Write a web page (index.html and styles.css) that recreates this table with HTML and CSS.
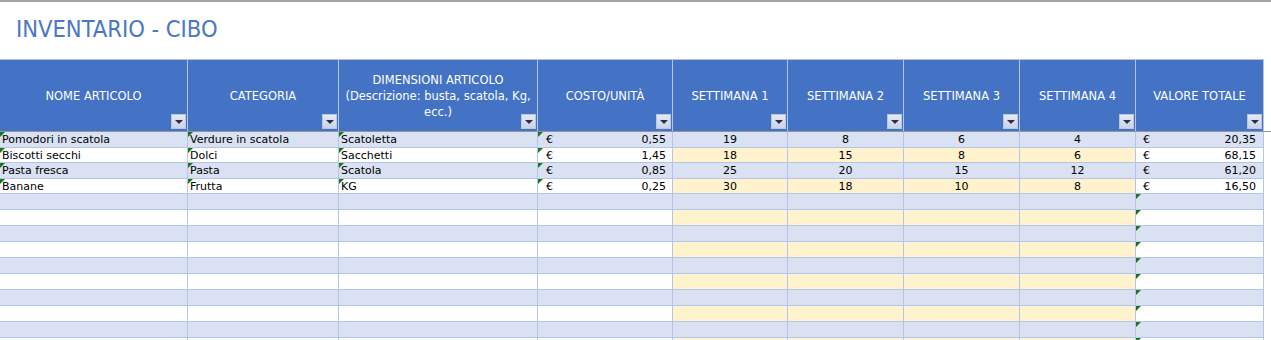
FILE: index.html
```html
<!DOCTYPE html>
<html lang="it">
<head>
<meta charset="utf-8">
<title>Inventario - Cibo</title>
<link rel="stylesheet" href="styles.css">
</head>
<body>
<div class="sheet">
  <h1 class="title">INVENTARIO - CIBO</h1>
  <div class="row head">
    <div class="hc"><span>NOME ARTICOLO</span><i class="dd"></i></div>
    <div class="hc"><span>CATEGORIA</span><i class="dd"></i></div>
    <div class="hc"><span>DIMENSIONI ARTICOLO<br>(Descrizione: busta, scatola, Kg,<br>ecc.)</span><i class="dd"></i></div>
    <div class="hc"><span>COSTO/UNITÀ</span><i class="dd"></i></div>
    <div class="hc"><span>SETTIMANA 1</span><i class="dd"></i></div>
    <div class="hc"><span>SETTIMANA 2</span><i class="dd"></i></div>
    <div class="hc"><span>SETTIMANA 3</span><i class="dd"></i></div>
    <div class="hc"><span>SETTIMANA 4</span><i class="dd"></i></div>
    <div class="hc"><span>VALORE TOTALE</span><i class="dd"></i></div>
  </div>
  <div class="freeze"></div>

  <div class="row alt tall">
    <div class="c flag">Pomodori in scatola</div>
    <div class="c flag">Verdure in scatola</div>
    <div class="c flag">Scatoletta</div>
    <div class="c money flag"><span>€</span><span>0,55</span></div>
    <div class="c wk num">19</div>
    <div class="c wk num">8</div>
    <div class="c wk num">6</div>
    <div class="c wk num">4</div>
    <div class="c money tot"><span>€</span><span>20,35</span></div>
  </div>
  <div class="row plain short">
    <div class="c flag">Biscotti secchi</div>
    <div class="c flag">Dolci</div>
    <div class="c flag">Sacchetti</div>
    <div class="c money flag"><span>€</span><span>1,45</span></div>
    <div class="c wk num">18</div>
    <div class="c wk num">15</div>
    <div class="c wk num">8</div>
    <div class="c wk num">6</div>
    <div class="c money tot"><span>€</span><span>68,15</span></div>
  </div>
  <div class="row alt tall">
    <div class="c flag">Pasta fresca</div>
    <div class="c flag">Pasta</div>
    <div class="c flag">Scatola</div>
    <div class="c money flag"><span>€</span><span>0,85</span></div>
    <div class="c wk num">25</div>
    <div class="c wk num">20</div>
    <div class="c wk num">15</div>
    <div class="c wk num">12</div>
    <div class="c money tot"><span>€</span><span>61,20</span></div>
  </div>
  <div class="row plain short">
    <div class="c flag">Banane</div>
    <div class="c flag">Frutta</div>
    <div class="c flag">KG</div>
    <div class="c money flag"><span>€</span><span>0,25</span></div>
    <div class="c wk num">30</div>
    <div class="c wk num">18</div>
    <div class="c wk num">10</div>
    <div class="c wk num">8</div>
    <div class="c money tot"><span>€</span><span>16,50</span></div>
  </div>

  <div class="row alt tall"><div class="c"></div><div class="c"></div><div class="c"></div><div class="c"></div><div class="c wk"></div><div class="c wk"></div><div class="c wk"></div><div class="c wk"></div><div class="c tot flag"></div></div>
  <div class="row plain tall"><div class="c"></div><div class="c"></div><div class="c"></div><div class="c"></div><div class="c wk"></div><div class="c wk"></div><div class="c wk"></div><div class="c wk"></div><div class="c tot flag"></div></div>
  <div class="row alt tall"><div class="c"></div><div class="c"></div><div class="c"></div><div class="c"></div><div class="c wk"></div><div class="c wk"></div><div class="c wk"></div><div class="c wk"></div><div class="c tot flag"></div></div>
  <div class="row plain tall"><div class="c"></div><div class="c"></div><div class="c"></div><div class="c"></div><div class="c wk"></div><div class="c wk"></div><div class="c wk"></div><div class="c wk"></div><div class="c tot flag"></div></div>
  <div class="row alt tall"><div class="c"></div><div class="c"></div><div class="c"></div><div class="c"></div><div class="c wk"></div><div class="c wk"></div><div class="c wk"></div><div class="c wk"></div><div class="c tot flag"></div></div>
  <div class="row plain tall"><div class="c"></div><div class="c"></div><div class="c"></div><div class="c"></div><div class="c wk"></div><div class="c wk"></div><div class="c wk"></div><div class="c wk"></div><div class="c tot flag"></div></div>
  <div class="row alt tall"><div class="c"></div><div class="c"></div><div class="c"></div><div class="c"></div><div class="c wk"></div><div class="c wk"></div><div class="c wk"></div><div class="c wk"></div><div class="c tot flag"></div></div>
  <div class="row plain tall"><div class="c"></div><div class="c"></div><div class="c"></div><div class="c"></div><div class="c wk"></div><div class="c wk"></div><div class="c wk"></div><div class="c wk"></div><div class="c tot flag"></div></div>
  <div class="row alt tall"><div class="c"></div><div class="c"></div><div class="c"></div><div class="c"></div><div class="c wk"></div><div class="c wk"></div><div class="c wk"></div><div class="c wk"></div><div class="c tot flag"></div></div>
  <div class="row plain tall"><div class="c"></div><div class="c"></div><div class="c"></div><div class="c"></div><div class="c wk"></div><div class="c wk"></div><div class="c wk"></div><div class="c wk"></div><div class="c tot flag"></div></div>
</div>
</body>
</html>
```
FILE: styles.css
```css
html, body {
  margin: 0;
  padding: 0;
  background: #ffffff;
}

body {
  font-family: "DejaVu Sans", Verdana, sans-serif;
  color: #000000;
}

.sheet {
  width: 1271px;
  height: 340px;
  box-sizing: border-box;
  border-top: 2px solid #a4a4a4;
  overflow: hidden;
}

.title {
  margin: 0;
  height: 57px;
  box-sizing: border-box;
  display: flex;
  align-items: center;
  padding: 0 0 4px 16px;
  font-family: "DejaVu Sans Condensed", "DejaVu Sans", Verdana, sans-serif;
  font-size: 23.5px;
  font-weight: normal;
  color: #4a78c3;
}

.row {
  display: grid;
  grid-template-columns: 188px 151px 199px 135px 115px 116px 116px 116px 128px;
  width: 1264px;
}

.head {
  border-top: 1px solid #b4c6e7;
}

.hc {
  position: relative;
  height: 71px;
  box-sizing: border-box;
  border-right: 1px solid #b4c6e7;
  background: #4472c4;
  color: #ffffff;
  font-size: 11.5px;
  line-height: 16px;
  display: flex;
  align-items: center;
  justify-content: center;
  text-align: center;
  white-space: nowrap;
}

.dd {
  position: absolute;
  right: 1px;
  bottom: 2px;
  width: 15px;
  height: 15px;
  box-sizing: border-box;
  border: 1px solid #b9c8df;
  background: linear-gradient(#e3eaf4, #c7d4e8);
  display: flex;
  align-items: center;
  justify-content: center;
}

.dd::after {
  content: "";
  margin-top: 1px;
  border-left: 4px solid transparent;
  border-right: 4px solid transparent;
  border-top: 4px solid #3a2945;
}

.freeze {
  height: 1px;
  width: 1271px;
  background: #969696;
}

.tall .c { height: 16px; }
.short .c { height: 15px; }

.c {
  position: relative;
  box-sizing: border-box;
  border-right: 1px solid #b4c6e7;
  border-bottom: 1px solid #b4c6e7;
  padding: 0 2px;
  font-size: 11px;
  display: flex;
  align-items: center;
  white-space: nowrap;
  overflow: hidden;
}

.alt .c { background: #d9e1f2; }
.plain .c { background: #ffffff; }
.plain .c.wk { background: #fff2cc; }

.num { justify-content: center; }

.money {
  justify-content: space-between;
  padding: 0 6px 0 8px;
}

.money.tot {
  padding: 0 7px 0 7px;
}

.flag::before {
  content: "";
  position: absolute;
  top: 0;
  left: 0;
  border-top: 5px solid #13791a;
  border-right: 5px solid transparent;
}
```
